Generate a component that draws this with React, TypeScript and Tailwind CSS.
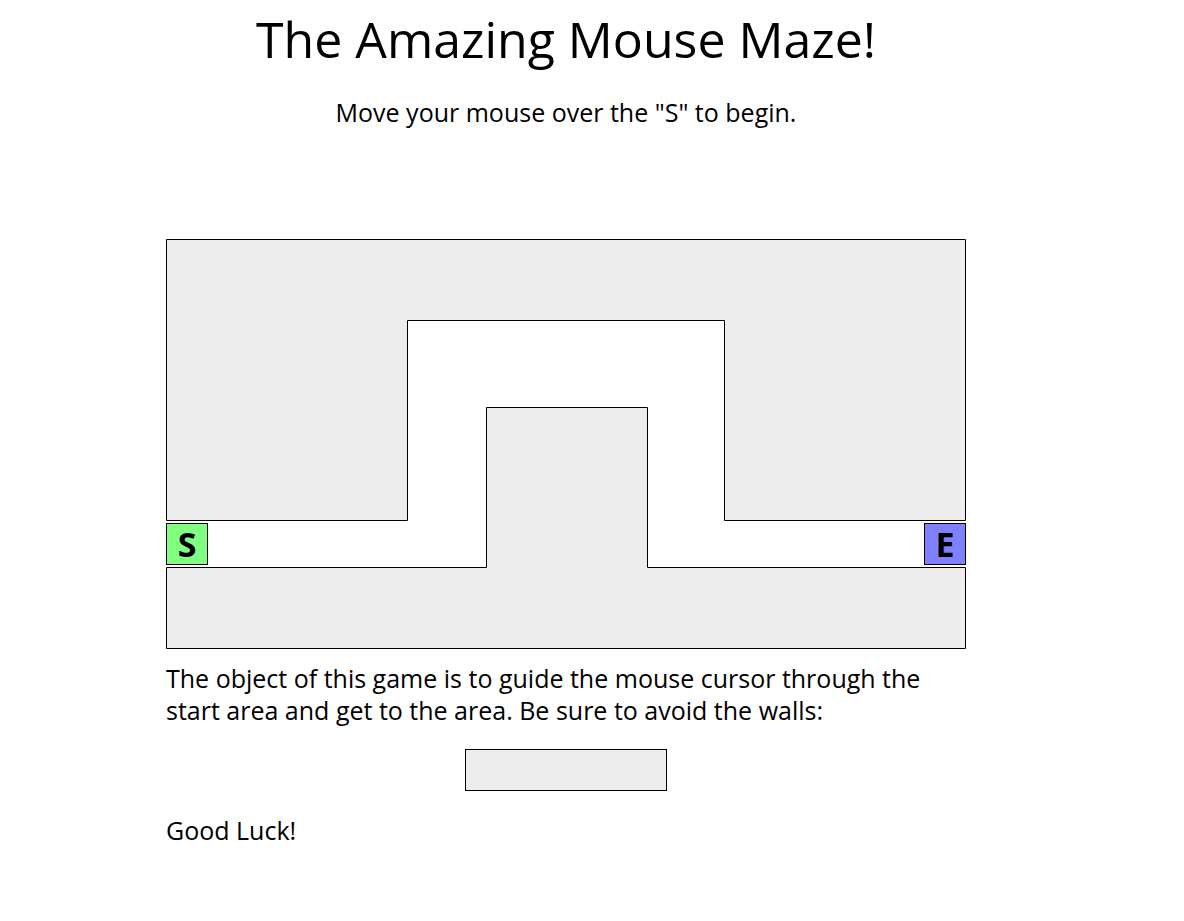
import React from 'react';

const font = { fontFamily: '"Open Sans", "Noto Sans", sans-serif' };

const Maze = () => {
  return (
    <div className="relative w-[800px] h-[410px]">
      <svg width="800" height="410" className="absolute left-0 top-0">
        {/* upper wall */}
        <path
          d="M0.5,0.5 H799.5 V281.5 H558.5 V81.5 H241.5 V281.5 H0.5 Z"
          fill="#ededed"
          stroke="#000"
          strokeWidth="1"
        />
        {/* lower wall */}
        <path
          d="M0.5,328.5 H320.5 V168.5 H481.5 V328.5 H799.5 V409.5 H0.5 Z"
          fill="#ededed"
          stroke="#000"
          strokeWidth="1"
        />
      </svg>
      <div className="absolute left-0 top-[284px] w-[42px] h-[42px] border border-black bg-[#80ff80] flex items-center justify-center text-[34px] font-bold leading-none text-black">
        S
      </div>
      <div className="absolute left-[758px] top-[284px] w-[42px] h-[42px] border border-black bg-[#8080ff] flex items-center justify-center text-[34px] font-bold leading-none text-black">
        E
      </div>
    </div>
  );
};

const App = () => {
  return (
    <div className="min-h-[921px] w-full bg-white text-black" style={font}>
      <div className="ml-[166px] w-[800px]">
        <h1 className="pt-[4px] h-[96px] text-center text-[50px] leading-[71px] font-normal">
          The Amazing Mouse Maze!
        </h1>
        <p className="h-[143px] text-center text-[25px] leading-[32px]">
          Move your mouse over the "S" to begin.
        </p>
        <Maze />
        <p className="mt-[13px] text-[25px] leading-[32px]">
          The object of this game is to guide the mouse cursor through the start area and get to the area. Be sure to avoid the walls:
        </p>
        <div className="mt-[23px] flex justify-center">
          <div className="w-[202px] h-[42px] border border-black bg-[#ededed]" />
        </div>
        <p className="mt-[23px] text-[25px] leading-[32px]">Good Luck!</p>
      </div>
    </div>
  );
};

export default App;
